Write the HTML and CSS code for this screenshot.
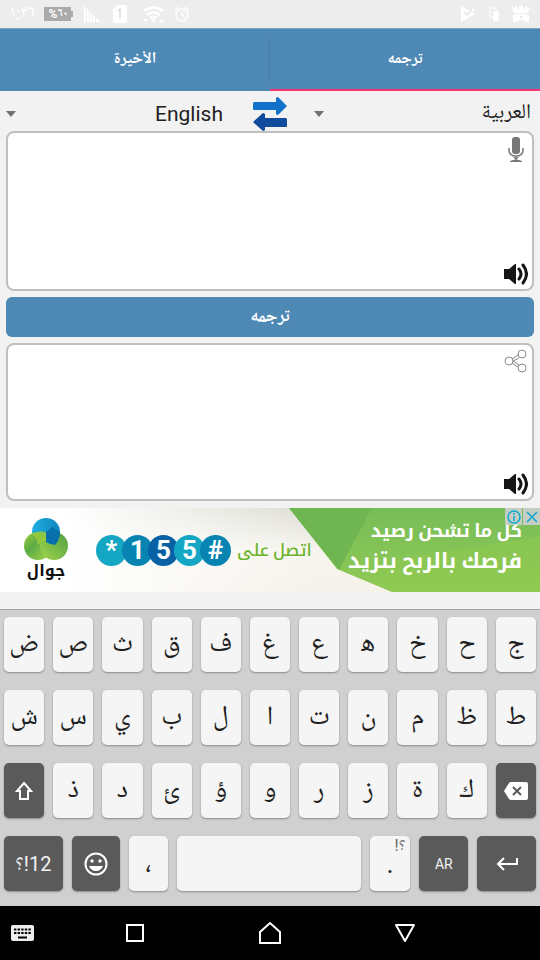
FILE: index.html
```html
<!DOCTYPE html>
<html lang="ar">
<head>
<meta charset="utf-8">
<meta name="viewport" content="width=device-width, initial-scale=1">
<title>ترجمه</title>
<link rel="stylesheet" href="styles.css">
</head>
<body>
<header class="status">
  <div class="status-group status-start">
    <span class="clock">١:٢٦</span>
    <svg width="30" height="14" viewBox="0 0 30 14" aria-hidden="true"><path fill="#aaa" d="M0 0h27v4h2v6h-2v4H0z"/><text x="14" y="11" text-anchor="middle" class="battery-text">%٦٠</text></svg>
    <svg class="signal" width="17" height="16" viewBox="0 0 17 16" aria-hidden="true"><path fill="#fff" d="M0 0l2 2v14H0zM3 3l2 2v11H3zM6 6l2 2v8H6zM9 9l2 2v5H9zM12 12l5 4h-5z"/></svg>
    <svg class="sim" width="14" height="18" viewBox="0 0 14 18" aria-hidden="true"><path fill="#fff" d="M4 0h8q2 0 2 2v14q0 2-2 2H2q-2 0-2-2V4z"/><path d="M5 6l2-2v10" fill="none" stroke="#ddd" stroke-width="1.5"/></svg>
    <svg class="wifi" width="21" height="17" viewBox="0 0 21 17" aria-hidden="true"><g fill="none" stroke="#fff" stroke-width="2.5"><path d="M1 5q9.500-7 19 0M4 9q6.500-5 13 0M7 12q3.500-2 7 0"/></g><path fill="#fff" d="M8 13h5l-2.500 4zM0 13h5l-2.500 3zM16 16h5l-2.500-3z"/></svg>
    <svg width="16" height="16" viewBox="0 0 16 16" fill="none" stroke="#fff" stroke-width="1.500" aria-hidden="true"><circle cx="8" cy="9" r="6"/><path d="M8 5v4l3 2M1 4l4-3M15 4l-4-3"/></svg>
  </div>
  <div class="status-group status-end">
    <svg width="16" height="16" viewBox="0 0 16 16" aria-hidden="true"><path fill="#fff" d="M1 0l14 8-14 8z"/><path d="M4 7l3 3 7-7" fill="none" stroke="#fff" stroke-width="3"/><path d="M4 6l3 3 5-5" fill="none" stroke="#e4e4e4" stroke-width="1.500"/></svg>
    <svg width="10" height="14" viewBox="0 0 10 14" aria-hidden="true"><path d="M7 3V1H1v9h2" fill="none" stroke="#fff"/><rect x="4" y="4" width="6" height="10" rx="1" fill="#fff"/></svg>
    <svg width="18" height="16" viewBox="0 0 18 16" aria-hidden="true"><path fill="#fff" d="M0 1l3 2V0h2v3h2V0h4v3h2V0h2v3l3-2-2 6H2zM1 9q8-3 16 0v7h-3q-5-4-10 0H1z"/><circle cx="9" cy="11" r="1" fill="#ddd"/></svg>
  </div>
</header>
<nav class="tabs">
  <button type="button" class="tab">الأخيرة</button>
  <button type="button" class="tab tab-active">ترجمه</button>
</nav>
<main class="translator">
  <div class="languages">
    <label class="language"><svg width="10" height="6" viewBox="0 0 10 6" aria-hidden="true"><path fill="#707070" d="M0 0h10L5 6z"/></svg><select dir="rtl" aria-label="English"><option>English</option><option>العربية</option></select></label>
    <button type="button" class="swap" aria-label="تبديل">
      <svg width="34" height="34" viewBox="0 0 34 34" aria-hidden="true"><path fill="#1272ca" d="M1 5h22V1q1-1 2-1l9 9-9 9q-1 0-2-1v-4H1q-1 0-1-1V6z"/><path fill="#104c9b" d="M33 21H12v-4q-1-1-2-1l-10 9 10 9q1 0 2-1v-3h21q1 0 1-1v-7z"/></svg>
    </button>
    <label class="language"><svg width="10" height="6" viewBox="0 0 10 6" aria-hidden="true"><path fill="#707070" d="M0 0h10L5 6z"/></svg><select dir="rtl" aria-label="العربية"><option>العربية</option><option>English</option></select></label>
  </div>
  <section class="field">
    <textarea dir="rtl" aria-label="العربية"></textarea>
    <div class="tools">
      <button type="button" aria-label="ميكروفون"><svg width="16" height="26" viewBox="0 0 16 26" aria-hidden="true"><rect x="4" y="0" width="8" height="17" rx="3" fill="#777"/><path d="M1 11v2q0 6 7 6t7-6v-2M8 19v4" fill="none" stroke="#777" stroke-width="1.500"/><path fill="#777" d="M4 19l4 2 4-2-3 3H7zM2 24q6-3 12 0v1H2z"/></svg></button>
      <button type="button" aria-label="استماع"><svg width="24" height="22" viewBox="0 0 24 22" aria-hidden="true"><path fill="#161616" d="M0 6h5l6-5h1v20h-1l-6-5H0z"/><path d="M15 6q4 5 0 10M19 2q7 9 0 18" fill="none" stroke="#161616" stroke-width="3" stroke-linecap="round"/></svg></button>
    </div>
  </section>
  <button type="button" class="translate">ترجمه</button>
  <section class="field">
    <textarea dir="ltr" aria-label="English"></textarea>
    <div class="tools">
      <button type="button" aria-label="مشاركة"><svg width="24" height="24" viewBox="0 0 24 24" aria-hidden="true"><g stroke="#8b8b8b" fill="#fff"><circle cx="5" cy="12" r="4"/><circle cx="18" cy="5" r="4"/><circle cx="18" cy="19" r="4"/><path d="M8 10l6-4M9 12l6-3M9 12l6 4M8 14l6 4"/></g></svg></button>
      <button type="button" aria-label="استماع"><svg width="24" height="22" viewBox="0 0 24 22" aria-hidden="true"><path fill="#161616" d="M0 6h5l6-5h1v20h-1l-6-5H0z"/><path d="M15 6q4 5 0 10M19 2q7 9 0 18" fill="none" stroke="#161616" stroke-width="3" stroke-linecap="round"/></svg></button>
    </div>
  </section>
</main>
<aside class="ad">
  <svg class="ad-back" viewBox="0 0 540 84" preserveAspectRatio="none" aria-hidden="true">
    <defs>
      <linearGradient id="paper" x2="0" y2="1"><stop offset="0" stop-color="#dcdbd2"/><stop offset=".5" stop-color="#f7f5ef"/><stop offset="1" stop-color="#f5f2ea"/></linearGradient>
      <linearGradient id="fade"><stop offset="0" stop-color="#fff"/><stop offset=".12" stop-color="#fff"/><stop offset=".6" stop-color="#fff" stop-opacity="0"/></linearGradient>
      <linearGradient id="leaf" x2="0" y2="1"><stop offset="0" stop-color="#78bd59"/><stop offset="1" stop-color="#90ca53"/></linearGradient>
    </defs>
    <path fill="url(#paper)" d="M0 0h540v84H0z"/><path fill="url(#fade)" d="M0 0h540v84H0z"/>
    <path fill="url(#leaf)" d="M289 0h251v84H392l-55-23z"/>
    <path fill="#6fb552" d="M289 0h83l-33 62z"/><path fill="#8fca4e" opacity=".5" d="M380 55l160-27v56H392z"/>
  </svg>
  <div class="brand">
    <svg width="44" height="42" viewBox="0 0 44 42" aria-hidden="true">
      <defs><linearGradient id="lime" x2="1" y2="1"><stop offset="0" stop-color="#a2cf3c"/><stop offset=".4" stop-color="#5dac47"/><stop offset="1" stop-color="#a5d64a"/></linearGradient><linearGradient id="lime2" x1="1" x2="0" y2="1"><stop offset="0" stop-color="#4f9e43"/><stop offset="1" stop-color="#a4d64c"/></linearGradient><linearGradient id="aqua"><stop offset="0" stop-color="#20aee0"/><stop offset="1" stop-color="#0e86bd"/></linearGradient></defs>
      <circle cx="22" cy="14" r="14" fill="url(#aqua)"/><circle cx="14" cy="28" r="14" fill="url(#lime)"/><circle cx="30" cy="28" r="14" fill="url(#lime2)"/><path fill="#a2cf3c" d="M8 16q7-4 14-2v9q-5-1-8 5-1-9-6-12z" opacity=".7"/><path fill="#0870ab" d="M22 14l6-5 8 5q0 8-5 13-4 0-9-3z"/>
    </svg>
    <span>جوال</span>
  </div>
  <div class="code"><span>*</span><span>1</span><span>5</span><span>5</span><span>#</span></div>
  <span class="call" dir="rtl">اتصل على</span>
  <p class="offer" dir="rtl"><span>كل ما تشحن رصيد</span><span class="offer-main">فرصك بالربح بتزيد</span></p>
  <div class="ad-controls">
    <button type="button" aria-label="معلومات"><svg width="14" height="14" viewBox="0 0 14 14" fill="none" stroke="#0aaacd" stroke-width="1.500" aria-hidden="true"><circle cx="7" cy="7" r="6"/><path d="M7 3v2M7 6v5"/></svg></button>
    <button type="button" aria-label="إغلاق"><svg width="12" height="12" viewBox="0 0 12 12" stroke="#0aaacd" stroke-width="1.500" aria-hidden="true"><path d="M1 1l10 10M11 1L1 11"/></svg></button>
  </div>
</aside>
<section class="keyboard">
  <div class="keys"><button type="button">ض</button><button type="button">ص</button><button type="button">ث</button><button type="button">ق</button><button type="button">ف</button><button type="button">غ</button><button type="button">ع</button><button type="button">ه&zwj;</button><button type="button">خ</button><button type="button">ح</button><button type="button">ج</button></div>
  <div class="keys"><button type="button">ش</button><button type="button">س</button><button type="button">ي</button><button type="button">ب</button><button type="button">ل</button><button type="button">ا</button><button type="button">ت</button><button type="button">ن</button><button type="button">م</button><button type="button">ظ</button><button type="button">ط</button></div>
  <div class="keys"><button type="button" class="dark" aria-label="Shift"><svg width="18" height="20" viewBox="0 0 18 20" fill="none" stroke="#fff" stroke-width="2" aria-hidden="true"><path d="M9 2l7 8h-3v8H5v-8H2z"/></svg></button><button type="button">ذ</button><button type="button">د</button><button type="button">ئ</button><button type="button">ؤ</button><button type="button">و</button><button type="button">ر</button><button type="button">ز</button><button type="button">ة</button><button type="button">ك</button><button type="button" class="dark" aria-label="Backspace"><svg width="24" height="18" viewBox="0 0 24 18" aria-hidden="true"><path fill="#fff" d="M7 0h15q2 0 2 2v14q0 2-2 2H7q-1 0-2-1L0 9l5-8q1-1 2-1z"/><path d="M9 5l8 8M17 5l-8 8" stroke="#5a5a5a" stroke-width="2"/></svg></button></div>
  <div class="keys keys-bottom"><button type="button" class="dark symbols"><bdo dir="ltr">؟!12</bdo></button><button type="button" class="dark" aria-label="Emoji"><svg width="24" height="24" viewBox="0 0 24 24" aria-hidden="true"><circle cx="12" cy="12" r="10.500" fill="none" stroke="#fff" stroke-width="2"/><circle cx="8" cy="9" r="1.700" fill="#fff"/><circle cx="16" cy="9" r="1.700" fill="#fff"/><path fill="#fff" d="M5 14h14q-2 5-7 5t-7-5z"/></svg></button><button type="button">،</button><button type="button" aria-label="Space"></button><button type="button" class="period">.<bdo dir="ltr" class="hint">!؟</bdo></button><button type="button" class="dark lang">AR</button><button type="button" class="dark" aria-label="Enter"><svg width="22" height="14" viewBox="0 0 22 14" fill="none" stroke="#fff" stroke-width="2" aria-hidden="true"><path d="M21 1v6H2M8 1L2 7l6 6"/></svg></button></div>
</section>
<footer class="system">
  <button type="button" class="ime" aria-label="Keyboard"><svg width="23" height="16" viewBox="0 0 23 16" aria-hidden="true"><rect width="23" height="16" rx="2" fill="#eee"/><path d="M3 4.500h17M3 8h17" stroke="#000" stroke-width="2" stroke-dasharray="2.400 1.200"/><path d="M7 12.500h9" stroke="#000" stroke-width="2"/></svg></button>
  <button type="button" aria-label="Recent"><svg width="20" height="20" viewBox="0 0 20 20" fill="none" stroke="#fff" stroke-width="2" aria-hidden="true"><path d="M2 2h16v16H2z"/></svg></button>
  <button type="button" aria-label="Home"><svg width="24" height="24" viewBox="0 0 24 24" fill="none" stroke="#fff" stroke-width="2" aria-hidden="true"><path d="M2 22V11L12 2l10 9v11z"/></svg></button>
  <button type="button" aria-label="Back"><svg width="22" height="20" viewBox="0 0 22 20" fill="none" stroke="#fff" stroke-width="2" stroke-linejoin="round" aria-hidden="true"><path d="M2 2h18l-9 16z"/></svg></button>
</footer>
</body>
</html>
```
FILE: styles.css
```css
* { box-sizing: border-box; }
body {
  margin: 0;
  min-height: 100vh;
  display: flex;
  flex-direction: column;
  background: #f2f2f2;
  color: #212121;
  font-family: Roboto, "Noto Naskh Arabic UI", "Noto Naskh Arabic", "DejaVu Sans", sans-serif;
}
button, select, textarea { font: inherit; color: inherit; border: 0; margin: 0; padding: 0; background: none; }
button { display: flex; align-items: center; justify-content: center; }
svg { display: block; flex: none; }

.status { height: 28px; display: flex; justify-content: space-between; padding: 0 10px; background: #ededed; color: #fff; }
.status-group { display: flex; align-items: center; gap: 10px; }
.status-end { gap: 13px; }
.clock { font-size: 18px; line-height: 20px; width: 24px; white-space: nowrap; }
.battery-text { font-size: 12px; font-weight: bold; fill: #fff; }
.sim { margin-left: 2px; }
.wifi { margin-left: 6px; }

.tabs { display: grid; grid-template-columns: 1fr 1fr; height: 63px; background: #4e89b6; border-top: 1px solid #7fa6c1; }
.tab { color: #fff; font-size: 16px; font-weight: bold; border-bottom: 2px solid transparent; }
.tab:first-child { background: linear-gradient(#447dab, #447dab) right center / 1px 44px no-repeat; }
.tab-active { border-bottom-color: #fc3275; }

.translator { flex: 1; display: flex; flex-direction: column; gap: 6px; padding: 0 6px 7px; }
.languages { display: flex; align-items: center; height: 40px; margin-bottom: -6px; padding-top: 6px; }
.language { flex: 1; display: flex; align-items: center; min-width: 0; }
.language select { flex: 1; min-width: 0; appearance: none; font-size: 21px; line-height: 30px; padding: 0 3px; }
.language:first-child select { padding-right: 30px; }
.language:last-child svg { margin-left: 27px; }
.field { flex: 1; display: flex; border: 2px solid #bfbfbf; border-radius: 8px; background: #fff; min-height: 120px; }
.field textarea { flex: 1; min-width: 0; resize: none; outline: 0; padding: 6px; font-size: 18px; }
.tools { display: flex; flex-direction: column; align-items: center; justify-content: space-between; padding: 4px; }
.translate { height: 40px; border-radius: 6px; background: #4e89b6; color: #fff; font-size: 18px; font-weight: bold; }

.ad { position: relative; height: 84px; display: flex; align-items: center; padding: 0 18px 0 24px; font-family: Roboto, "Noto Kufi Arabic", "DejaVu Sans", sans-serif; }
.ad-back { position: absolute; inset: 0; width: 100%; height: 100%; z-index: -1; }
.brand { width: 44px; display: flex; flex-direction: column; align-items: center; font-size: 16px; line-height: 22px; font-weight: bold; color: #111; }
.code { display: flex; margin-left: 28px; }
.code span { width: 31px; height: 31px; margin-right: -5px; border-radius: 50%; display: flex; align-items: center; justify-content: center; background: #14a6c3; color: #fff; font-size: 26px; font-weight: bold; }
.code span:nth-child(2), .code span:nth-child(5) { background: #0784b1; }
.code span:nth-child(3) { background: #0761a4; }
.call { margin-left: 11px; color: #6cb52d; font-size: 17px; font-weight: 500; white-space: nowrap; }
.offer { margin: 0 0 0 auto; padding-bottom: 8px; display: flex; flex-direction: column; color: #fff; font-size: 18px; line-height: 30px; font-weight: bold; white-space: nowrap; }
.offer-main { font-size: 21px; }
.ad-controls { position: absolute; top: 0; right: 0; display: flex; gap: 1px; }
.ad-controls button { width: 17px; height: 17px; background: #c5cdc5; }

.keyboard { margin-top: 17px; padding: 7px 4px 15px; border-top: 1px solid #a3a3a3; background: #d0d0d0; display: grid; gap: 18px; }
.keys { display: grid; grid-template-columns: repeat(11, 1fr); gap: 9px; }
.keys-bottom { grid-template-columns: 59fr 48fr 40fr 184fr 41fr 49fr 59fr; }
.keys button { position: relative; height: 55px; min-width: 0; border-radius: 5px; background: #f5f5f5; box-shadow: 0 1px 2px #888; font-size: 27px; }
.keys .dark { background: #5a5a5a; color: #f2f2f2; }
.keys .symbols { font-size: 20px; }
.keys .lang { font-size: 14px; }
.hint { position: absolute; top: 0; right: 5px; font-size: 16px; line-height: 20px; color: #666; }

.system { height: 54px; background: #000; display: grid; grid-template-columns: 1fr 2fr 2fr 2fr 1fr; align-items: center; }
.system .ime { justify-content: flex-start; padding-left: 11px; }
```
